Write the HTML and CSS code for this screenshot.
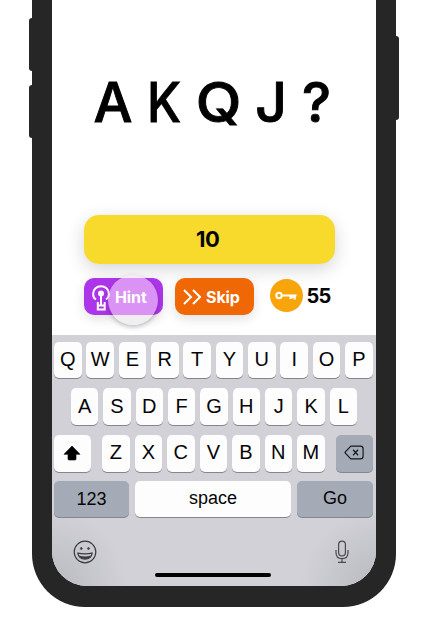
FILE: index.html
```
<!DOCTYPE html>
<html lang="en">
<head>
<meta charset="utf-8">
<title>Word puzzle</title>
<link rel="stylesheet" href="styles.css">
</head>
<body>
<div class="phone">
  <i class="side up"></i><i class="side down"></i><i class="side power"></i>
  <main class="screen">
    <section class="game">
      <h1 class="puzzle"><span>A</span><span>K</span><span>Q</span><span>J</span><span>?</span></h1>
      <div class="answer">10</div>
      <div class="actions">
        <button class="action hint">
          <svg width="18" height="28" viewBox="0 0 18 28" fill="none" stroke="#fff" stroke-width="2"><path d="M4 14.500C1.500 13 1 10.500 1.200 8.500A7.700 7.200 0 0 1 16.800 8.500C17 10.500 16 13 14 14.500"/><circle cx="9" cy="8.500" r="2" fill="#fff"/><path d="M9 9v11M5.800 17v7.500h6.900v-7.500M5.800 20.500h6.900"/></svg>
          <span>Hint</span><i class="touch"></i>
        </button>
        <button class="action skip">
          <svg width="18" height="16" viewBox="0 0 18 16" fill="none" stroke="#fff" stroke-width="2"><path d="M1 1l7 7-7 7M10 1l7 7-7 7"/></svg>
          <span>Skip</span>
        </button>
        <div class="keys-left">
          <div class="coin"><svg width="22" height="10" viewBox="0 0 22 10" fill="none" stroke="#fff" stroke-width="2"><circle cx="4" cy="4.500" r="2.700"/><path d="M7 4.500h14.500M15.500 5v3M19.800 5v3.500M16 6.200h4"/></svg></div>
          <span>55</span>
        </div>
      </div>
    </section>
    <section class="keyboard">
      <div class="row"><b>Q</b><b>W</b><b>E</b><b>R</b><b>T</b><b>Y</b><b>U</b><b>I</b><b>O</b><b>P</b></div>
      <div class="row inset"><b>A</b><b>S</b><b>D</b><b>F</b><b>G</b><b>H</b><b>J</b><b>K</b><b>L</b></div>
      <div class="row letters">
        <b class="wide"><svg width="18" height="16" viewBox="0 0 18 16"><path d="M9 1L17 9.300H13V14a1 1 0 0 1-1 1H6a1 1 0 0 1-1-1V9.300H1z" stroke="#000" stroke-width=".6" stroke-linejoin="round"/></svg></b>
        <div class="row mid"><b>Z</b><b>X</b><b>C</b><b>V</b><b>B</b><b>N</b><b>M</b></div>
        <b class="wide dark"><svg width="20" height="15" viewBox="0 0 22 16" fill="none" stroke="#15171a" stroke-width="1.300" stroke-linejoin="round"><path d="M7.500 1H18a3 3 0 0 1 3 3v8a3 3 0 0 1-3 3H7.500L1.500 8.700a1 1 0 0 1 0-1.400zM10 5l5.500 6M15.500 5L10 11"/></svg></b>
      </div>
      <div class="row bottom"><b class="dark num">123</b><b class="space">space</b><b class="dark go">Go</b></div>
      <div class="tools">
        <svg width="24" height="24" viewBox="0 0 24 24" fill="none" stroke="#3c3c40" stroke-width="1.200"><circle cx="12" cy="12" r="10.800"/><circle cx="8.300" cy="8.500" r="1" fill="#3c3c40" stroke-width=".6"/><circle cx="15.500" cy="8.500" r="1" fill="#3c3c40" stroke-width=".6"/><path d="M4.800 13.200Q12 14.600 19.200 13.200C18.500 17.200 15.500 19.200 12 19.200S5.500 17.200 4.800 13.200z"/><path d="M6 15.500Q12 17.500 18 15.500C16.500 18.300 14.500 19 12 19S7.500 18.300 6 15.500z" fill="#3c3c40" stroke="none"/></svg>
        <svg width="14" height="24" viewBox="0 0 14 24" fill="none" stroke="#4a4a4e" stroke-width="1.200"><rect x="3.600" y="1.200" width="6.800" height="14.600" rx="3.400"/><path d="M1 10v2.500C1 16.500 3.500 18.700 7 18.700S13 16.500 13 12.500V10M7 18.700V22.400M3 22.400h8"/></svg>
      </div>
      <div class="home"></div>
    </section>
  </main>
</div>
</body>
</html>
```

FILE: styles.css
```
* { box-sizing: border-box; }
body { margin: 0; height: 640px; overflow: hidden; background: #fff; font-family: Inter, "Liberation Sans", sans-serif; color: #050505; }
.phone { position: relative; width: 364px; height: 606.5px; margin-left: 32px; padding: 0 20.300px 21px 20px; background: #262626; border-radius: 0 0 53px 53px; }
.side { position: absolute; background: #262626; width: 5px; }
.up { left: -3.500px; top: 18px; height: 53px; border-radius: 3px 0 0 3px; }
.down { left: -3.500px; top: 85px; height: 53px; border-radius: 3px 0 0 3px; }
.power { right: -3px; top: 36px; height: 84px; border-radius: 0 3px 3px 0; }
.screen { height: 100%; overflow: hidden; background: #fff; border-radius: 0 0 35px 35px; display: flex; flex-direction: column; }
.game { height: 335px; padding: 67px 0 0 31.500px; }
.puzzle { margin: 0; height: 70px; display: grid; grid-template-columns: 59px 46px 61px 42px 50px; width: 258px; font-size: 55px; font-weight: 500; line-height: 70px; color: #000; -webkit-text-stroke: .9px #000; }
.puzzle span { justify-self: center; }
.puzzle span:nth-child(2) { transform: translateX(-2px) scaleX(.9); }
.puzzle span:nth-child(3) { transform: translateX(-.5px) scaleX(1.080); }
.puzzle span:nth-child(4) { transform: translateX(.5px); }
.answer { margin-top: 78px; width: 251.500px; height: 49px; border-radius: 15px; background: #f8da2c; box-shadow: 0 5px 18px rgba(0,0,0,.17); text-align: center; font-size: 22px; line-height: 48px; font-weight: 700; padding-right: 3px; letter-spacing: -.5px; }
.actions { display: flex; align-items: center; margin-top: 14px; height: 37px; }
.action { position: relative; width: 79px; height: 37px; padding: 0; border: 0; border-radius: 10px; color: #fff; font: 700 16px Inter, sans-serif; display: flex; align-items: center; box-shadow: 0 4px 12px rgba(0,0,0,.12); }
.hint { background: #ad35e9; padding-left: 8.500px; gap: 5px; letter-spacing: -.1px; }
.hint svg { margin-top: 5px; }
.skip { background: #f06805; margin-left: 12.500px; padding-left: 8px; gap: 5px; letter-spacing: -.1px; }
.touch { position: absolute; left: 24.500px; top: -3px; width: 50px; height: 50px; border-radius: 50%; box-shadow: 0 2px 5px rgba(0,0,0,.25); background: linear-gradient(rgba(255,225,255,.55) 0 40px, rgba(240,238,241,.9) 40px); }
.hint span { position: relative; z-index: 1; }
.keys-left { margin-left: 15.500px; margin-top: -2px; display: flex; align-items: center; gap: 4px; font-size: 20px; font-weight: 700; letter-spacing: -.8px; }
.coin { width: 33px; height: 33px; border-radius: 50%; background: #f8a50c; display: flex; align-items: center; justify-content: center; }
.keyboard { flex: 1; padding: 6.500px 3px 0 2px; background: radial-gradient(circle at 0 100%, #b9b9c1, transparent 75px), radial-gradient(circle at 100% 100%, #b9b9c1, transparent 75px), #d1d1d7; font-family: "Liberation Sans", Arial, sans-serif; }
.row { display: flex; justify-content: space-between; height: 36.500px; margin-bottom: 10.300px; }
.row b { width: 27.500px; height: 36.500px; border-radius: 5px; background: #fdfdfe; box-shadow: 0 1px 0 #85868a; font-size: 20px; font-weight: 400; display: flex; align-items: center; justify-content: center; padding-bottom: 1px; }
.inset { padding: 0 15.500px 0 16.800px; }
.mid { width: 222.500px; margin: 0; }
.row .wide { width: 36.500px; }
.row .dark { background: #a4aab6; }
.bottom { margin-top: -1.300px; }
.row .num { width: 75px; font-size: 18px; padding-top: 2px; }
.row .space { width: 156.500px; font-size: 18px; padding-bottom: 1px; }
.row .go { width: 75.500px; font-size: 18px; }
.tools { display: flex; justify-content: space-between; padding: 12.500px 23.500px 0 18.500px; }
.home { width: 116px; height: 4.500px; border-radius: 3px; background: #000; margin: 9px 0 0 101px; }
```
